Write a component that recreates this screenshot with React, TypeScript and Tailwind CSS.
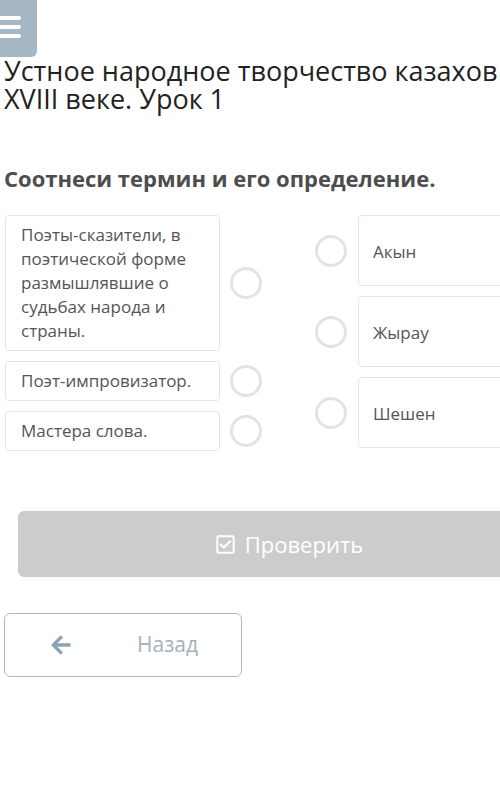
import { FaArrowLeft, FaRegCheckSquare } from "react-icons/fa";

const leftItems = [
    { id: 1, text: "Поэты-сказители, в поэтической форме размышлявшие о судьбах народа и страны." },
    { id: 2, text: "Поэт-импровизатор." },
    { id: 3, text: "Мастера слова." },
];

const rightItems = ["Акын", "Жырау", "Шешен"];

const Circle = () => (
    <div className="w-[32px] h-[32px] shrink-0 rounded-full border-[3px] border-[#e3e3e3] bg-white" />
);

export default function App() {
    return (
        <div
            className="w-[500px] h-[791px] overflow-hidden bg-white"
            style={{ fontFamily: '"Open Sans", "Noto Sans", sans-serif' }}
        >
            <div className="w-[570px]">
                <div className="w-[37px] h-[57px] bg-[#a5b7c5] rounded-br-md flex flex-col gap-[5px] pt-[16px]">
                    <div className="w-[21px] h-[4px] bg-white rounded-r-sm" />
                    <div className="w-[21px] h-[4px] bg-white rounded-r-sm" />
                    <div className="w-[21px] h-[4px] bg-white rounded-r-sm" />
                </div>

                <h1 className="pl-[4px] pr-[20px] text-[27px] leading-[28px] text-[#222222]">
                    Устное народное творчество казахов в XVIII веке. Урок 1
                </h1>

                <h2 className="pl-[4px] mt-[51px] text-[22px] leading-[28px] font-bold text-[#4d4d4d]">
                    Соотнеси термин и его определение.
                </h2>

                <div className="flex mt-[23px] pl-[5px]">
                    <div className="flex flex-col gap-[10px]">
                        {leftItems.map((item) => (
                            <div className="flex items-center gap-[10px]" key={item.id}>
                                <div className="w-[215px] border border-[#e4e4e4] rounded-[4px] px-[15px] py-[7px] text-[17px] leading-[24px] text-[#555555]">
                                    {item.text}
                                </div>
                                <Circle />
                            </div>
                        ))}
                    </div>

                    <div className="flex flex-col gap-[10px] ml-[53px]">
                        {rightItems.map((term) => (
                            <div className="flex items-center gap-[11px]" key={term}>
                                <Circle />
                                <div className="w-[210px] h-[71px] border border-[#e4e4e4] rounded-[4px] px-[14px] flex items-center text-[17px] text-[#555555]">
                                    <span className="mt-[2px]">{term}</span>
                                </div>
                            </div>
                        ))}
                    </div>
                </div>

                <button className="ml-[18px] mt-[60px] w-[542px] h-[66px] rounded-md bg-[#cccccc] text-white text-[22px] flex items-center justify-center gap-[9px]">
                    <FaRegCheckSquare className="w-[21px] h-[21px]" />
                    <span>Проверить</span>
                </button>

                <button className="ml-[4px] mt-[36px] w-[238px] h-[64px] rounded-md border border-[#a9bcc8] bg-white flex items-center pl-[44px] text-[21px] text-[#a2b1ba]">
                    <FaArrowLeft className="w-[24px] h-[22px] text-[#8aa3b2]" />
                    <span className="ml-[64px]">Назад</span>
                </button>
            </div>
        </div>
    );
}
